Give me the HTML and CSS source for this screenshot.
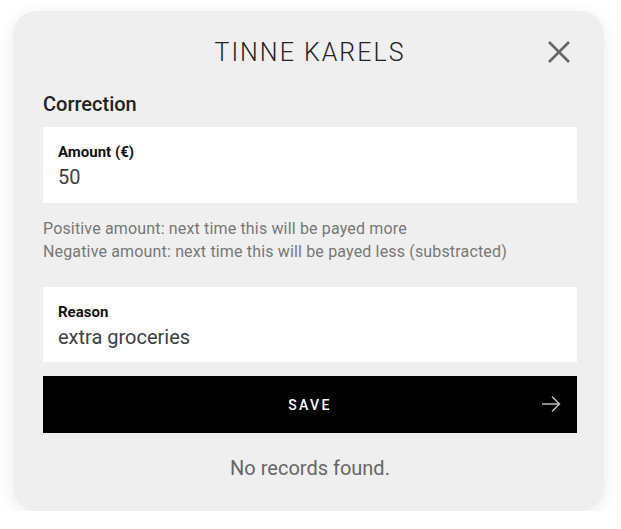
FILE: index.html
```html
<!DOCTYPE html>
<html>
<head>
<meta charset="utf-8">
<link rel="stylesheet" href="styles.css">
</head>
<body>
<div class="card">
  <div class="header">
    <h1 class="title">TINNE KARELS</h1>
    <button class="close" aria-label="Close">
      <svg width="24" height="24" viewBox="0 0 24 24"><path d="M2 2 L22 22 M22 2 L2 22" stroke="#666" stroke-width="2.6" fill="none"/></svg>
    </button>
  </div>
  <h2 class="section">Correction</h2>
  <div class="field">
    <div class="label">Amount (€)</div>
    <div class="value">50</div>
  </div>
  <p class="help">Positive amount: next time this will be payed more<br>Negative amount: next time this will be payed less (substracted)</p>
  <div class="field reason">
    <div class="label">Reason</div>
    <div class="value">extra groceries</div>
  </div>
  <button class="save">
    <span>SAVE</span>
    <svg class="arrow" width="20" height="20" viewBox="0 0 20 20"><path d="M1 10 H18 M11 2.5 L18.5 10 L11 17.5" stroke="#bbb" stroke-width="1.5" fill="none"/></svg>
  </button>
  <p class="empty">No records found.</p>
</div>
</body>
</html>
```
FILE: styles.css
```css
html, body { margin: 0; padding: 0; background: #fff; }
body { font-family: Roboto, "Liberation Sans", sans-serif; }
.card {
  margin: 11px 0 0 13px;
  width: 591px;
  box-sizing: border-box;
  padding: 22px 27px 31px 30px;
  background: #efefef;
  border-radius: 24px;
  box-shadow: 0 4px 18px rgba(0,0,0,0.08);
}
.header {
  position: relative;
  height: 40px;
  display: flex;
  align-items: center;
  justify-content: center;
}
.title {
  margin: 0;
  font-size: 25px;
  font-weight: 300;
  letter-spacing: 2px;
  color: #222;
  line-height: 40px;
}
.close {
  position: absolute;
  right: 6px;
  top: 7px;
  padding: 0;
  border: 0;
  background: none;
  width: 24px;
  height: 24px;
}
.close svg { display: block; }
.section {
  margin: 19px 0 11px;
  font-size: 20px;
  font-weight: 500;
  line-height: 24px;
  color: #222;
}
.field {
  background: #fff;
  padding: 16px 15px 14px;
  height: 76px;
  box-sizing: border-box;
}
.reason { height: 75px; }
.label {
  font-size: 15px;
  font-weight: 700;
  line-height: 18px;
  color: #111;
  margin-bottom: 3px;
}
.value {
  font-size: 20px;
  line-height: 26px;
  color: #3a3f45;
}
.help {
  margin: 14px 0 24px;
  font-size: 16px;
  line-height: 23px;
  letter-spacing: 0.16px;
  color: #777;
}
.save {
  position: relative;
  margin-top: 14px;
  width: 100%;
  height: 57px;
  border: 0;
  background: #000;
  color: #fff;
  font-family: Roboto, "Liberation Sans", sans-serif;
  font-size: 14px;
  font-weight: 500;
  letter-spacing: 2.4px;
  display: flex;
  align-items: center;
  justify-content: center;
  padding: 0;
}
.arrow { position: absolute; right: 16px; top: 18px; }
.empty {
  margin: 23px 0 0;
  text-align: center;
  font-size: 20px;
  line-height: 24px;
  color: #666;
}
```
